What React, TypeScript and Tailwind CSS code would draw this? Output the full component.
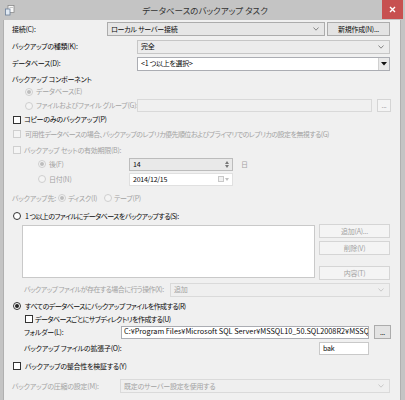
import React from "react";

// ウィンドウ全体: 405x400
const jp = "font-['Noto_Sans_CJK_JP','Noto_Sans',sans-serif] [font-feature-settings:'palt']";
const on = "text-[#0a0a0a]";
const off = "text-[#a3a3a3]";
const tight = "tracking-[-0.55px]";

function Chevron({ color = "#7a7a7a" }: { color?: string }) {
  return (
    <svg width="6" height="4" viewBox="0 0 6 4" className="shrink-0">
      <polyline points="0.5,0.5 3,3.2 5.5,0.5" fill="none" stroke={color} strokeWidth="0.9" />
    </svg>
  );
}

function CheckBox({ disabled }: { disabled?: boolean }) {
  return (
    <span
      className={`inline-block w-[8px] h-[8px] border shrink-0 ${
        disabled ? "border-[#cfcfcf] bg-[#f4f4f4]" : "border-[#333] bg-white"
      }`}
    />
  );
}

function Radio({ checked, disabled }: { checked?: boolean; disabled?: boolean }) {
  return (
    <span
      className={`inline-flex items-center justify-center w-[8px] h-[8px] rounded-full border shrink-0 ${
        disabled ? "border-[#cfcfcf] bg-[#f4f4f4]" : "border-[#333] bg-white"
      }`}
    >
      {checked && <span className={`w-[4px] h-[4px] rounded-full ${disabled ? "bg-[#bdbdbd]" : "bg-[#222]"}`} />}
    </span>
  );
}

function Combo({ text, width, disabled, light }: { text: string; width: string; disabled?: boolean; light?: boolean }) {
  return (
    <div
      className={`${width} shrink-0 h-[14px] flex items-center justify-between pl-[3px] pr-[5px] border ${
        disabled
          ? "border-[#dadada] bg-[#efefef] text-[#a3a3a3]"
          : light
          ? "border-[#c6c6c6] bg-[#ececec] text-[#0a0a0a]"
          : "border-[#acacac] bg-[#e6e6e6] text-[#0a0a0a]"
      }`}
    >
      <span>{text}</span>
      <Chevron color={disabled ? "#c4c4c4" : "#7a7a7a"} />
    </div>
  );
}

function Btn({ text, width, disabled, h = "h-[14px]" }: { text: string; width: string; disabled?: boolean; h?: string }) {
  return (
    <div
      className={`${width} ${h} shrink-0 flex items-center justify-center border ${
        disabled ? "border-[#d5d5d5] bg-[#f4f4f4] text-[#a3a3a3]" : "border-[#acacac] bg-[#e3e3e3] text-[#0a0a0a]"
      }`}
    >
      {text}
    </div>
  );
}

export default function App() {
  return (
    <div
      className={`w-[405px] h-[400px] bg-[#c4c4c4] flex flex-col text-[7px] tracking-[-0.25px] leading-none whitespace-nowrap ${jp} overflow-hidden`}
    >
      {/* タイトルバー */}
      <div className="h-[20px] flex items-center relative shrink-0">
        <svg width="10" height="11" viewBox="0 0 10 11" className="ml-[5px]">
          <rect x="3" y="0.5" width="6" height="7" fill="#f7f7f7" stroke="#8a8a8a" strokeWidth="0.8" />
          <rect x="0.5" y="4" width="4.5" height="6" fill="#dfe8f2" stroke="#6b7f99" strokeWidth="0.8" />
          <line x1="4.5" y1="2.5" x2="8" y2="2.5" stroke="#a8a8a8" strokeWidth="0.6" />
        </svg>
        <div className="flex-1 text-center text-[8.5px] tracking-normal text-[#333] pr-[10px]">データベースのバックアップ タスク</div>
        <div className="absolute right-[2px] top-0 w-[21px] h-[19px] bg-[#c75050] flex items-center justify-center">
          <svg width="7" height="7" viewBox="0 0 7 7">
            <path d="M1 1 L6 6 M6 1 L1 6" stroke="#fff" strokeWidth="1.4" />
          </svg>
        </div>
      </div>

      <div className="flex-1 flex">
        <div className="w-[4px] bg-[#c4c4c4] border-r border-[#b0b0b0]" />
        <div className="flex-1 bg-[#f0f0f0] flex flex-col">
          {/* 接続 */}
          <div className="h-[18px] flex items-center pl-[8px]">
            <span className={`w-[95px] shrink-0 ${on}`}>接続(C):</span>
            <Combo text="ローカル サーバー接続" width="w-[218px]" />
            <div className="ml-[2px]">
              <Btn text="新規作成(N)..." width="w-[63px]" />
            </div>
          </div>
          {/* 種類 */}
          <div className="h-[17px] flex items-center pl-[8px]">
            <span className={`w-[125px] shrink-0 ${on}`}>バックアップの種類(K):</span>
            <Combo text="完全" width="w-[253px]" light />
          </div>
          {/* データベース */}
          <div className="h-[17px] flex items-center pl-[8px]">
            <span className={`w-[125px] shrink-0 ${on}`}>データベース(D):</span>
            <div className="w-[253px] shrink-0 h-[14px] flex items-center justify-between border border-[#abadb3] bg-white pl-[3px] text-[#0a0a0a]">
              <span>&lt;1 つ以上を選択&gt;</span>
              <div className="w-[11px] h-full bg-[#e9e9e9] border-l border-[#d0d0d0] flex items-center justify-center">
                <svg width="6" height="4" viewBox="0 0 6 4">
                  <polygon points="0,0 6,0 3,3.5" fill="#111" />
                </svg>
              </div>
            </div>
          </div>
          {/* コンポーネント */}
          <div className={`h-[14px] flex items-center pl-[8px] ${on}`}>バックアップ コンポーネント</div>
          <div className={`h-[11px] flex items-center pl-[21px] ${off}`}>
            <Radio checked disabled />
            <span className="ml-[3px]">データベース(E)</span>
          </div>
          <div className={`h-[17px] flex items-center pl-[21px] ${off}`}>
            <Radio disabled />
            <span className="ml-[3px] w-[101px] shrink-0">ファイルおよびファイル グループ(G):</span>
            <div className="w-[235px] shrink-0 h-[13px] border border-[#d9d9d9] bg-[#f0f0f0]" />
            <div className="ml-[5px]">
              <Btn text="..." width="w-[14px]" h="h-[13px]" disabled />
            </div>
          </div>
          {/* コピーのみ */}
          <div className={`h-[11px] flex items-center pl-[9px] ${on}`}>
            <CheckBox />
            <span className="ml-[3px]">コピーのみのバックアップ(P)</span>
          </div>
          <div className={`h-[18px] flex items-center pl-[9px] ${off}`}>
            <CheckBox disabled />
            <span className={`ml-[4px] ${tight}`}>
              可用性データベースの場合、バックアップのレプリカ優先順位およびプライマリでのレプリカの設定を無視する(G)
            </span>
          </div>
          <div className={`h-[14px] flex items-center pl-[9px] ${off}`}>
            <CheckBox disabled />
            <span className="ml-[3px]">バックアップ セットの有効期限(B):</span>
          </div>
          {/* 後 */}
          <div className={`h-[14px] flex items-center pl-[34px] ${off}`}>
            <Radio checked disabled />
            <span className="ml-[3px] w-[80px] shrink-0">後(F)</span>
            <div className="w-[104px] shrink-0 h-[13px] flex items-center justify-between border border-[#bcbcbc] bg-[#e9e9e9] pl-[3px] pr-[3px] text-[#0a0a0a]">
              <span>14</span>
              <div className="flex flex-col gap-[1px]">
                <svg width="4" height="3" viewBox="0 0 4 3"><polygon points="0,3 4,3 2,0" fill="#777" /></svg>
                <svg width="4" height="3" viewBox="0 0 4 3"><polygon points="0,0 4,0 2,3" fill="#777" /></svg>
              </div>
            </div>
            <span className="ml-[8px]">日</span>
          </div>
          {/* 日付 */}
          <div className={`h-[16px] flex items-center pl-[34px] ${off}`}>
            <Radio disabled />
            <span className="ml-[3px] w-[80px] shrink-0">日付(N)</span>
            <div className="w-[104px] shrink-0 h-[13px] flex items-center justify-between border border-[#e0e0e0] bg-white pl-[3px] pr-[3px] text-[#0a0a0a]">
              <span>2014/12/15</span>
              <div className="flex items-center gap-[1px]">
                <span className="w-[6px] h-[6px] border border-[#c8c8c8] bg-[#f2f2f2]" />
                <svg width="4" height="3" viewBox="0 0 4 3"><polygon points="0,0 4,0 2,3" fill="#c0c0c0" /></svg>
              </div>
            </div>
          </div>
          {/* バックアップ先 */}
          <div className={`h-[22px] flex items-center pl-[8px] ${off}`}>
            <span className="w-[46px] shrink-0">バックアップ先:</span>
            <Radio checked disabled />
            <span className="ml-[2px] w-[36px] shrink-0">ディスク(I)</span>
            <Radio disabled />
            <span className="ml-[2px]">テープ(P)</span>
          </div>
          {/* ファイルへ */}
          <div className={`h-[14px] flex items-center pl-[9px] ${on}`}>
            <Radio />
            <span className={`ml-[4px] ${tight}`}>1 つ以上のファイルにデータベースをバックアップする(S):</span>
          </div>
          <div className="h-[58px] flex pl-[18px] pt-[1px]">
            <div className="w-[293px] shrink-0 h-[53px] mt-[1px] border border-[#c9c9c9] bg-white" />
            <div className="ml-[4px] flex flex-col">
              <Btn text="追加(A)..." width="w-[71px]" disabled />
              <div className="mt-[3px]">
                <Btn text="削除(V)" width="w-[71px]" disabled />
              </div>
              <div className="mt-[11px]">
                <Btn text="内容(T)" width="w-[71px]" disabled />
              </div>
            </div>
          </div>
          <div className={`h-[17px] flex items-center pl-[20px] ${off}`}>
            <span className={`w-[146px] shrink-0 ${tight}`}>バックアップ ファイルが存在する場合に行う操作(X):</span>
            <Combo text="追加" width="w-[220px]" disabled />
          </div>
          {/* すべて */}
          <div className={`h-[16px] flex items-center pl-[9px] ${on}`}>
            <Radio checked />
            <span className={`ml-[4px] ${tight}`}>すべてのデータベースにバックアップ ファイルを作成する(R)</span>
          </div>
          <div className={`h-[10px] flex items-center pl-[21px] ${on}`}>
            <CheckBox />
            <span className={`ml-[2px] ${tight}`}>データベースごとにサブディレクトリを作成する(U)</span>
          </div>
          <div className={`h-[16px] flex items-center pl-[20px] ${on}`}>
            <span className="w-[97px] shrink-0">フォルダー(L):</span>
            <div className="w-[248px] shrink-0 h-[13px] flex items-center border border-[#abadb3] bg-white pl-[2px] overflow-hidden text-[7.3px] tracking-normal">
              C:¥Program Files¥Microsoft SQL Server¥MSSQL10_50.SQL2008R2¥MSSQL
            </div>
            <div className="ml-[5px]">
              <Btn text="..." width="w-[17px]" h="h-[14px]" />
            </div>
          </div>
          <div className={`h-[17px] flex items-center pl-[20px] ${on}`}>
            <span className="w-[295px] shrink-0">バックアップ ファイルの拡張子(O):</span>
            <div className="w-[50px] shrink-0 h-[13px] flex items-center border border-[#c9c9c9] bg-white pl-[3px]">bak</div>
          </div>
          <div className={`h-[18px] flex items-center pl-[9px] ${on}`}>
            <CheckBox />
            <span className="ml-[4px]">バックアップの整合性を検証する(Y)</span>
          </div>
          <div className={`h-[22px] flex items-center pl-[8px] ${off}`}>
            <span className="w-[108px] shrink-0">バックアップの圧縮の設定(M):</span>
            <Combo text="既定のサーバー設定を使用する" width="w-[270px]" disabled />
          </div>
        </div>
        <div className="w-[5px] bg-[#c4c4c4] border-l border-[#b0b0b0]" />
      </div>
    </div>
  );
}
